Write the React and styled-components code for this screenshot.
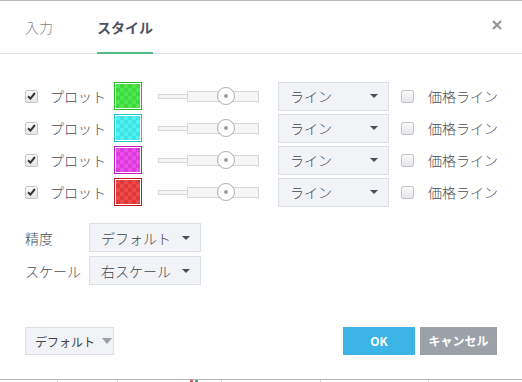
import React from 'react'
import styled, { createGlobalStyle } from 'styled-components'

const GlobalStyle = createGlobalStyle`
  html, body {
    margin: 0;
    padding: 0;
    background: #fff;
  }
  body {
    font-family: "Noto Sans CJK JP", "Noto Sans", sans-serif;
    font-weight: 300;
    color: #4a4e57;
  }
`

const plots = [
  { fill: '#4ee84e', dark: '#3fd83f', border: '#1fbf1f' },
  { fill: '#4ff1f1', dark: '#3ee3e3', border: '#19c8c8' },
  { fill: '#ea4dea', dark: '#dc3cdc', border: '#c21bc2' },
  { fill: '#ee4a4a', dark: '#de3a3a', border: '#c21b1b' },
]

function Check({ on }) {
  return (
    <CheckBox>
      {on && (
        <svg width="9" height="8" viewBox="0 0 9 8">
          <path d="M1 4.2 L3.4 6.6 L8 1" fill="none" stroke="#33363b" strokeWidth="2" />
        </svg>
      )}
    </CheckBox>
  )
}

function Select({ value, width }) {
  return (
    <SelectBox $width={width}>
      <span>{value}</span>
      <Caret />
    </SelectBox>
  )
}

function App() {
  return (
    <>
      <GlobalStyle />
      <Dialog>
        <Header>
          <Tab>入力</Tab>
          <Tab $active>スタイル</Tab>
          <Close>
            <svg width="10" height="10" viewBox="0 0 10 10">
              <path d="M1 1 L9 9 M9 1 L1 9" stroke="#8d9199" strokeWidth="2" />
            </svg>
          </Close>
        </Header>
        <Body>
          {plots.map((p, i) => (
            <PlotRow key={i}>
              <Check on />
              <PlotLabel>プロット</PlotLabel>
              <Swatch $fill={p.fill} $dark={p.dark} $border={p.border}>
                <span />
              </Swatch>
              <Slider>
                <Track />
                <Rest />
                <Knob />
              </Slider>
              <Select value="ライン" width={111} />
              <Check />
              <PriceLabel>価格ライン</PriceLabel>
            </PlotRow>
          ))}
          <Options>
            <OptionRow>
              <OptionLabel>精度</OptionLabel>
              <Select value="デフォルト" width={112} />
            </OptionRow>
            <OptionRow>
              <OptionLabel>スケール</OptionLabel>
              <Select value="右スケール" width={112} />
            </OptionRow>
          </Options>
        </Body>
        <Footer>
          <DefaultButton>
            デフォルト
            <BigCaret />
          </DefaultButton>
          <Spacer />
          <OkButton>OK</OkButton>
          <CancelButton>キャンセル</CancelButton>
        </Footer>
        <ChartEdge>
          <Tick $at={57} />
          <Tick $at={117} />
          <Mark $at={190} $color="#e0525a" />
          <Mark $at={195} $color="#3fb27f" />
          <Tick $at={221} />
          <Tick $at={320} />
          <Tick $at={428} />
        </ChartEdge>
      </Dialog>
    </>
  )
}

export default App

const Dialog = styled.div`
  width: 522px;
  height: 382px;
  border-top: 1px solid #b9b9b9;
  box-sizing: border-box;
  display: flex;
  flex-direction: column;
  overflow: hidden;
  position: relative;
`
const Header = styled.div`
  height: 52px;
  border-bottom: 1px solid #e0e3eb;
  display: flex;
  align-items: stretch;
  padding-left: 25px;
  padding-right: 20px;
`
const Tab = styled.div`
  display: flex;
  align-items: center;
  font-size: 14px;
  font-weight: ${p => (p.$active ? 700 : 300)};
  color: ${p => (p.$active ? '#4c525e' : '#80858e')};
  margin-right: 44px;
  border-bottom: 2px solid ${p => (p.$active ? '#53b987' : 'transparent')};
  margin-bottom: -1px;
`
const Close = styled.div`
  margin-left: auto;
  display: flex;
  align-items: center;
  padding-bottom: 4px;
`
const Body = styled.div`
  padding: 26px 0 0 25px;
  display: flex;
  flex-direction: column;
`
const PlotRow = styled.div`
  height: 32px;
  display: flex;
  align-items: center;
`
const CheckBox = styled.div`
  width: 11px;
  height: 11px;
  border: 1px solid #c3c5c9;
  border-radius: 2px;
  background: linear-gradient(#fbfbfb, #e4e5e8);
  display: flex;
  align-items: center;
  justify-content: center;
  flex-shrink: 0;
`
const PlotLabel = styled.div`
  font-size: 14px;
  width: 64px;
  margin-left: 12px;
  color: #4a4e57;
`
const Swatch = styled.div`
  width: 24px;
  height: 24px;
  border: 1px solid ${p => p.$border};
  padding: 1px;
  background: #fff;
  span {
    display: block;
    width: 100%;
    height: 100%;
    background-color: ${p => p.$fill};
    background-image:
      linear-gradient(45deg, ${p => p.$dark} 25%, transparent 25%, transparent 75%, ${p => p.$dark} 75%),
      linear-gradient(45deg, ${p => p.$dark} 25%, transparent 25%, transparent 75%, ${p => p.$dark} 75%);
    background-size: 8px 8px;
    background-position: 0 0, 4px 4px;
  }
`
const Slider = styled.div`
  position: relative;
  width: 101px;
  height: 18px;
  margin-left: 16px;
  margin-right: 19px;
  display: flex;
  align-items: center;
`
const Track = styled.div`
  width: 28px;
  height: 3px;
  border: 1px solid #d4d6da;
  border-right: none;
  background: #f6f6f7;
`
const Rest = styled.div`
  flex: 1;
  height: 9px;
  border: 1px solid #d4d6da;
  background: #f6f6f7;
`
const Knob = styled.div`
  position: absolute;
  left: 59px;
  top: 0;
  width: 16px;
  height: 16px;
  border-radius: 50%;
  border: 1px solid #a9acb2;
  background: #fff;
  &::after {
    content: '';
    position: absolute;
    left: 6px;
    top: 6px;
    width: 4px;
    height: 4px;
    border-radius: 50%;
    background: #9a9ea6;
  }
`
const SelectBox = styled.div`
  width: ${p => p.$width}px;
  height: 29px;
  box-sizing: border-box;
  border: 1px solid #dcdfe5;
  background: #f1f3f7;
  display: flex;
  align-items: center;
  padding: 0 10px 0 11px;
  font-size: 14px;
  color: #3f434b;
  margin-right: 12px;
  span {
    flex: 1;
  }
`
const Caret = styled.div`
  width: 0;
  height: 0;
  border-left: 4px solid transparent;
  border-right: 4px solid transparent;
  border-top: 4px solid #4a4e57;
`
const PriceLabel = styled.div`
  font-size: 14px;
  margin-left: 14px;
  color: #4a4e57;
`
const Options = styled.div`
  margin-top: 15px;
  display: flex;
  flex-direction: column;
  gap: 4px;
`
const OptionRow = styled.div`
  display: flex;
  align-items: center;
  height: 29px;
`
const OptionLabel = styled.div`
  width: 64px;
  font-size: 14px;
  color: #4a4e57;
`
const Footer = styled.div`
  margin-top: 42px;
  padding: 0 25px;
  display: flex;
  align-items: center;
`
const DefaultButton = styled.div`
  width: 89px;
  height: 28px;
  box-sizing: border-box;
  border: 1px solid #dcdfe5;
  background: #f1f3f7;
  display: flex;
  align-items: center;
  padding-left: 9px;
  font-size: 12px;
  font-weight: 400;
  color: #3f434b;
`
const BigCaret = styled.div`
  margin-left: 7px;
  width: 0;
  height: 0;
  border-left: 5px solid transparent;
  border-right: 5px solid transparent;
  border-top: 6px solid #9b9fa6;
`
const Spacer = styled.div`
  flex: 1;
`
const Btn = styled.div`
  height: 28px;
  display: flex;
  align-items: center;
  justify-content: center;
  color: #fff;
  font-size: 12px;
  font-weight: 700;
  padding-bottom: 2px;
  box-sizing: border-box;
`
const OkButton = styled(Btn)`
  width: 72px;
  background: #3cb4e5;
  margin-right: 5px;
`
const CancelButton = styled(Btn)`
  width: 77px;
  background: #9ca0a7;
`
const ChartEdge = styled.div`
  position: absolute;
  left: 0;
  right: 0;
  bottom: 0;
  height: 2px;
  border-top: 1px solid #b5b5b5;
`
const Tick = styled.div`
  position: absolute;
  left: ${p => p.$at}px;
  top: 0;
  width: 1px;
  height: 2px;
  background: #d8d8d8;
`
const Mark = styled.div`
  position: absolute;
  left: ${p => p.$at}px;
  top: 0;
  width: 3px;
  height: 2px;
  background: ${p => p.$color};
`
